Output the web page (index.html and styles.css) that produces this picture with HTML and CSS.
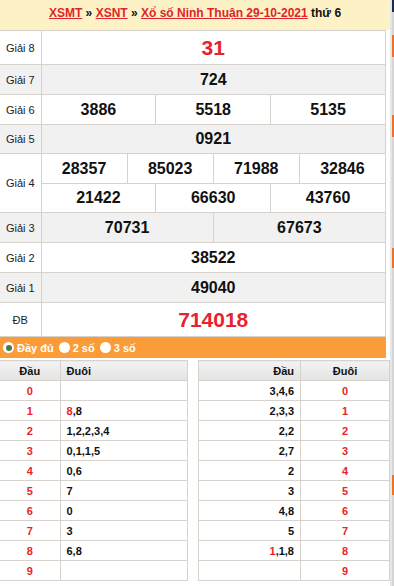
FILE: index.html
```html
<!DOCTYPE html>
<html lang="vi">
<head>
<meta charset="utf-8">
<title>XSNT 29-10-2021</title>
<link rel="stylesheet" href="styles.css">
</head>
<body>
<div class="page">
  <main class="main">
    <h2 class="title">
      <a href="#">XSMT</a> » <a href="#">XSNT</a> » <a href="#">Xổ số Ninh Thuận 29-10-2021</a> thứ 6
    </h2>
    <table class="kq">
      <tr class="r-big"><td class="lbl">Giải 8</td><td colspan="12" class="red big">31</td></tr>
      <tr class="alt"><td class="lbl">Giải 7</td><td colspan="12">724</td></tr>
      <tr><td class="lbl">Giải 6</td><td colspan="4">3886</td><td colspan="4">5518</td><td colspan="4">5135</td></tr>
      <tr class="alt r-29"><td class="lbl">Giải 5</td><td colspan="12">0921</td></tr>
      <tr><td class="lbl" rowspan="2">Giải 4</td><td colspan="3">28357</td><td colspan="3">85023</td><td colspan="3">71988</td><td colspan="3">32846</td></tr>
      <tr class="r-29"><td colspan="4">21422</td><td colspan="4">66630</td><td colspan="4">43760</td></tr>
      <tr class="alt"><td class="lbl">Giải 3</td><td colspan="6">70731</td><td colspan="6">67673</td></tr>
      <tr><td class="lbl">Giải 2</td><td colspan="12">38522</td></tr>
      <tr class="alt"><td class="lbl">Giải 1</td><td colspan="12">49040</td></tr>
      <tr class="r-big"><td class="lbl">ĐB</td><td colspan="12" class="red big">714018</td></tr>
    </table>
    <div class="opts">
      <label class="opt"><span class="radio on"></span>Đầy đủ</label>
      <label class="opt"><span class="radio"></span>2 số</label>
      <label class="opt"><span class="radio"></span>3 số</label>
    </div>
    <div class="loto">
      <table class="lt lt-left">
        <tr><th class="c1">Đầu</th><th class="c2">Đuôi</th></tr>
        <tr><td class="k">0</td><td class="v"></td></tr>
        <tr><td class="k">1</td><td class="v"><span class="rd">8</span>,8</td></tr>
        <tr><td class="k">2</td><td class="v">1,2,2,3,4</td></tr>
        <tr><td class="k">3</td><td class="v">0,1,1,5</td></tr>
        <tr><td class="k">4</td><td class="v">0,6</td></tr>
        <tr><td class="k">5</td><td class="v">7</td></tr>
        <tr><td class="k">6</td><td class="v">0</td></tr>
        <tr><td class="k">7</td><td class="v">3</td></tr>
        <tr><td class="k">8</td><td class="v">6,8</td></tr>
        <tr><td class="k">9</td><td class="v"></td></tr>
      </table>
      <table class="lt lt-right">
        <tr><th class="c1">Đầu</th><th class="c2">Đuôi</th></tr>
        <tr><td class="v">3,4,6</td><td class="k">0</td></tr>
        <tr><td class="v">2,3,3</td><td class="k">1</td></tr>
        <tr><td class="v">2,2</td><td class="k">2</td></tr>
        <tr><td class="v">2,7</td><td class="k">3</td></tr>
        <tr><td class="v">2</td><td class="k">4</td></tr>
        <tr><td class="v">3</td><td class="k">5</td></tr>
        <tr><td class="v">4,8</td><td class="k">6</td></tr>
        <tr><td class="v">5</td><td class="k">7</td></tr>
        <tr><td class="v"><span class="rd">1</span>,1,8</td><td class="k">8</td></tr>
        <tr><td class="v"></td><td class="k">9</td></tr>
      </table>
    </div>
  </main>
  <aside class="side">
    <div class="side-in">
      <div class="navy"></div>
      <div class="seg s1"></div>
      <div class="seg s2"></div>
      <div class="seg s3"></div>
      <div class="seg s4"></div>
    </div>
  </aside>
</div>
</body>
</html>
```

FILE: styles.css
```css
* { box-sizing: border-box; }
html, body { margin: 0; padding: 0; background: #fff; }
body { font-family: "Liberation Sans", Arial, sans-serif; color: #000; }

.page { display: flex; width: 394px; height: 586px; overflow: hidden; }
.main { width: 390px; flex: none; }

.title {
  margin: 0;
  height: 30px;
  background: #fdf2c6;
  font-size: 12px;
  font-weight: bold;
  line-height: 27px;
  text-align: center;
  color: #111;
}
.title a { color: #e0242b; text-decoration: underline; }

.kq {
  width: 386px;
  border-collapse: collapse;
  table-layout: fixed;
}
.kq td {
  border: 1px solid #d8d2cc;
  height: 30px;
  padding: 0;
  text-align: center;
  font-size: 16px;
  font-weight: bold;
  color: #111;
}
.kq td:first-child { border-left: none; }
.kq .lbl {
  width: 41px;
  font-size: 11px;
  font-weight: normal;
  color: #222;
}
.kq tr.alt td { background: #f1f1f1; }
.kq tr.r-29 td { height: 29px; }
.kq tr.r-big td { height: 34px; }
.kq .big { font-size: 21px; }
.kq .red { color: #e8232b; }

.opts {
  width: 386px;
  height: 21px;
  background: #fa9c37;
  display: flex;
  align-items: center;
  padding-left: 3px;
  gap: 5px;
}
.opt {
  display: flex;
  align-items: center;
  gap: 3px;
  color: #fff;
  font-size: 11px;
  font-weight: bold;
}
.radio {
  width: 11px;
  height: 11px;
  border-radius: 50%;
  background: #fff;
  display: inline-block;
  position: relative;
}
.radio.on::after {
  content: "";
  position: absolute;
  left: 2.5px;
  top: 2.5px;
  width: 6px;
  height: 6px;
  border-radius: 50%;
  background: #4a7a4a;
}

.loto {
  display: grid;
  grid-template-columns: 188px 192px;
  column-gap: 10px;
  margin-top: 2px;
}
.lt {
  border-collapse: collapse;
  table-layout: fixed;
  width: 100%;
}
.lt th, .lt td {
  border: 1px solid #d8d2cc;
  height: 20px;
  padding: 0 6px;
  font-size: 11px;
  font-weight: bold;
}
.lt th {
  background: linear-gradient(#f3f3f3, #e3e3e3);
  color: #111;
}
.lt-left th:first-child, .lt-left td:first-child { border-left: none; }
.lt-left .c1 { width: 60px; text-align: center; }
.lt-left .c2 { text-align: left; }
.lt-right .c1 { text-align: right; }
.lt-right .c2 { width: 89px; text-align: center; }
.lt .k { color: #e8232b; text-align: center; }
.lt-left .v { text-align: left; color: #111; }
.lt-right .v { text-align: right; color: #111; }
.rd { color: #e8232b; }

.side { width: 4px; flex: none; display: flex; }
.side-in {
  width: 4px;
  height: 586px;
  background: linear-gradient(to right, #e6e6e6 0 2px, #d6d6d6 2px 4px);
  position: relative;
}
.navy {
  position: absolute; left: 2px; top: 0; width: 2px; height: 12px; background: #1e2a4c;
}
.seg { position: absolute; left: 2px; width: 2px; background: #e8742a; }
.s1 { top: 35px; height: 22px; }
.s2 { top: 115px; height: 22px; }
.s3 { top: 248px; height: 20px; }
.s4 { top: 475px; height: 20px; }
```
